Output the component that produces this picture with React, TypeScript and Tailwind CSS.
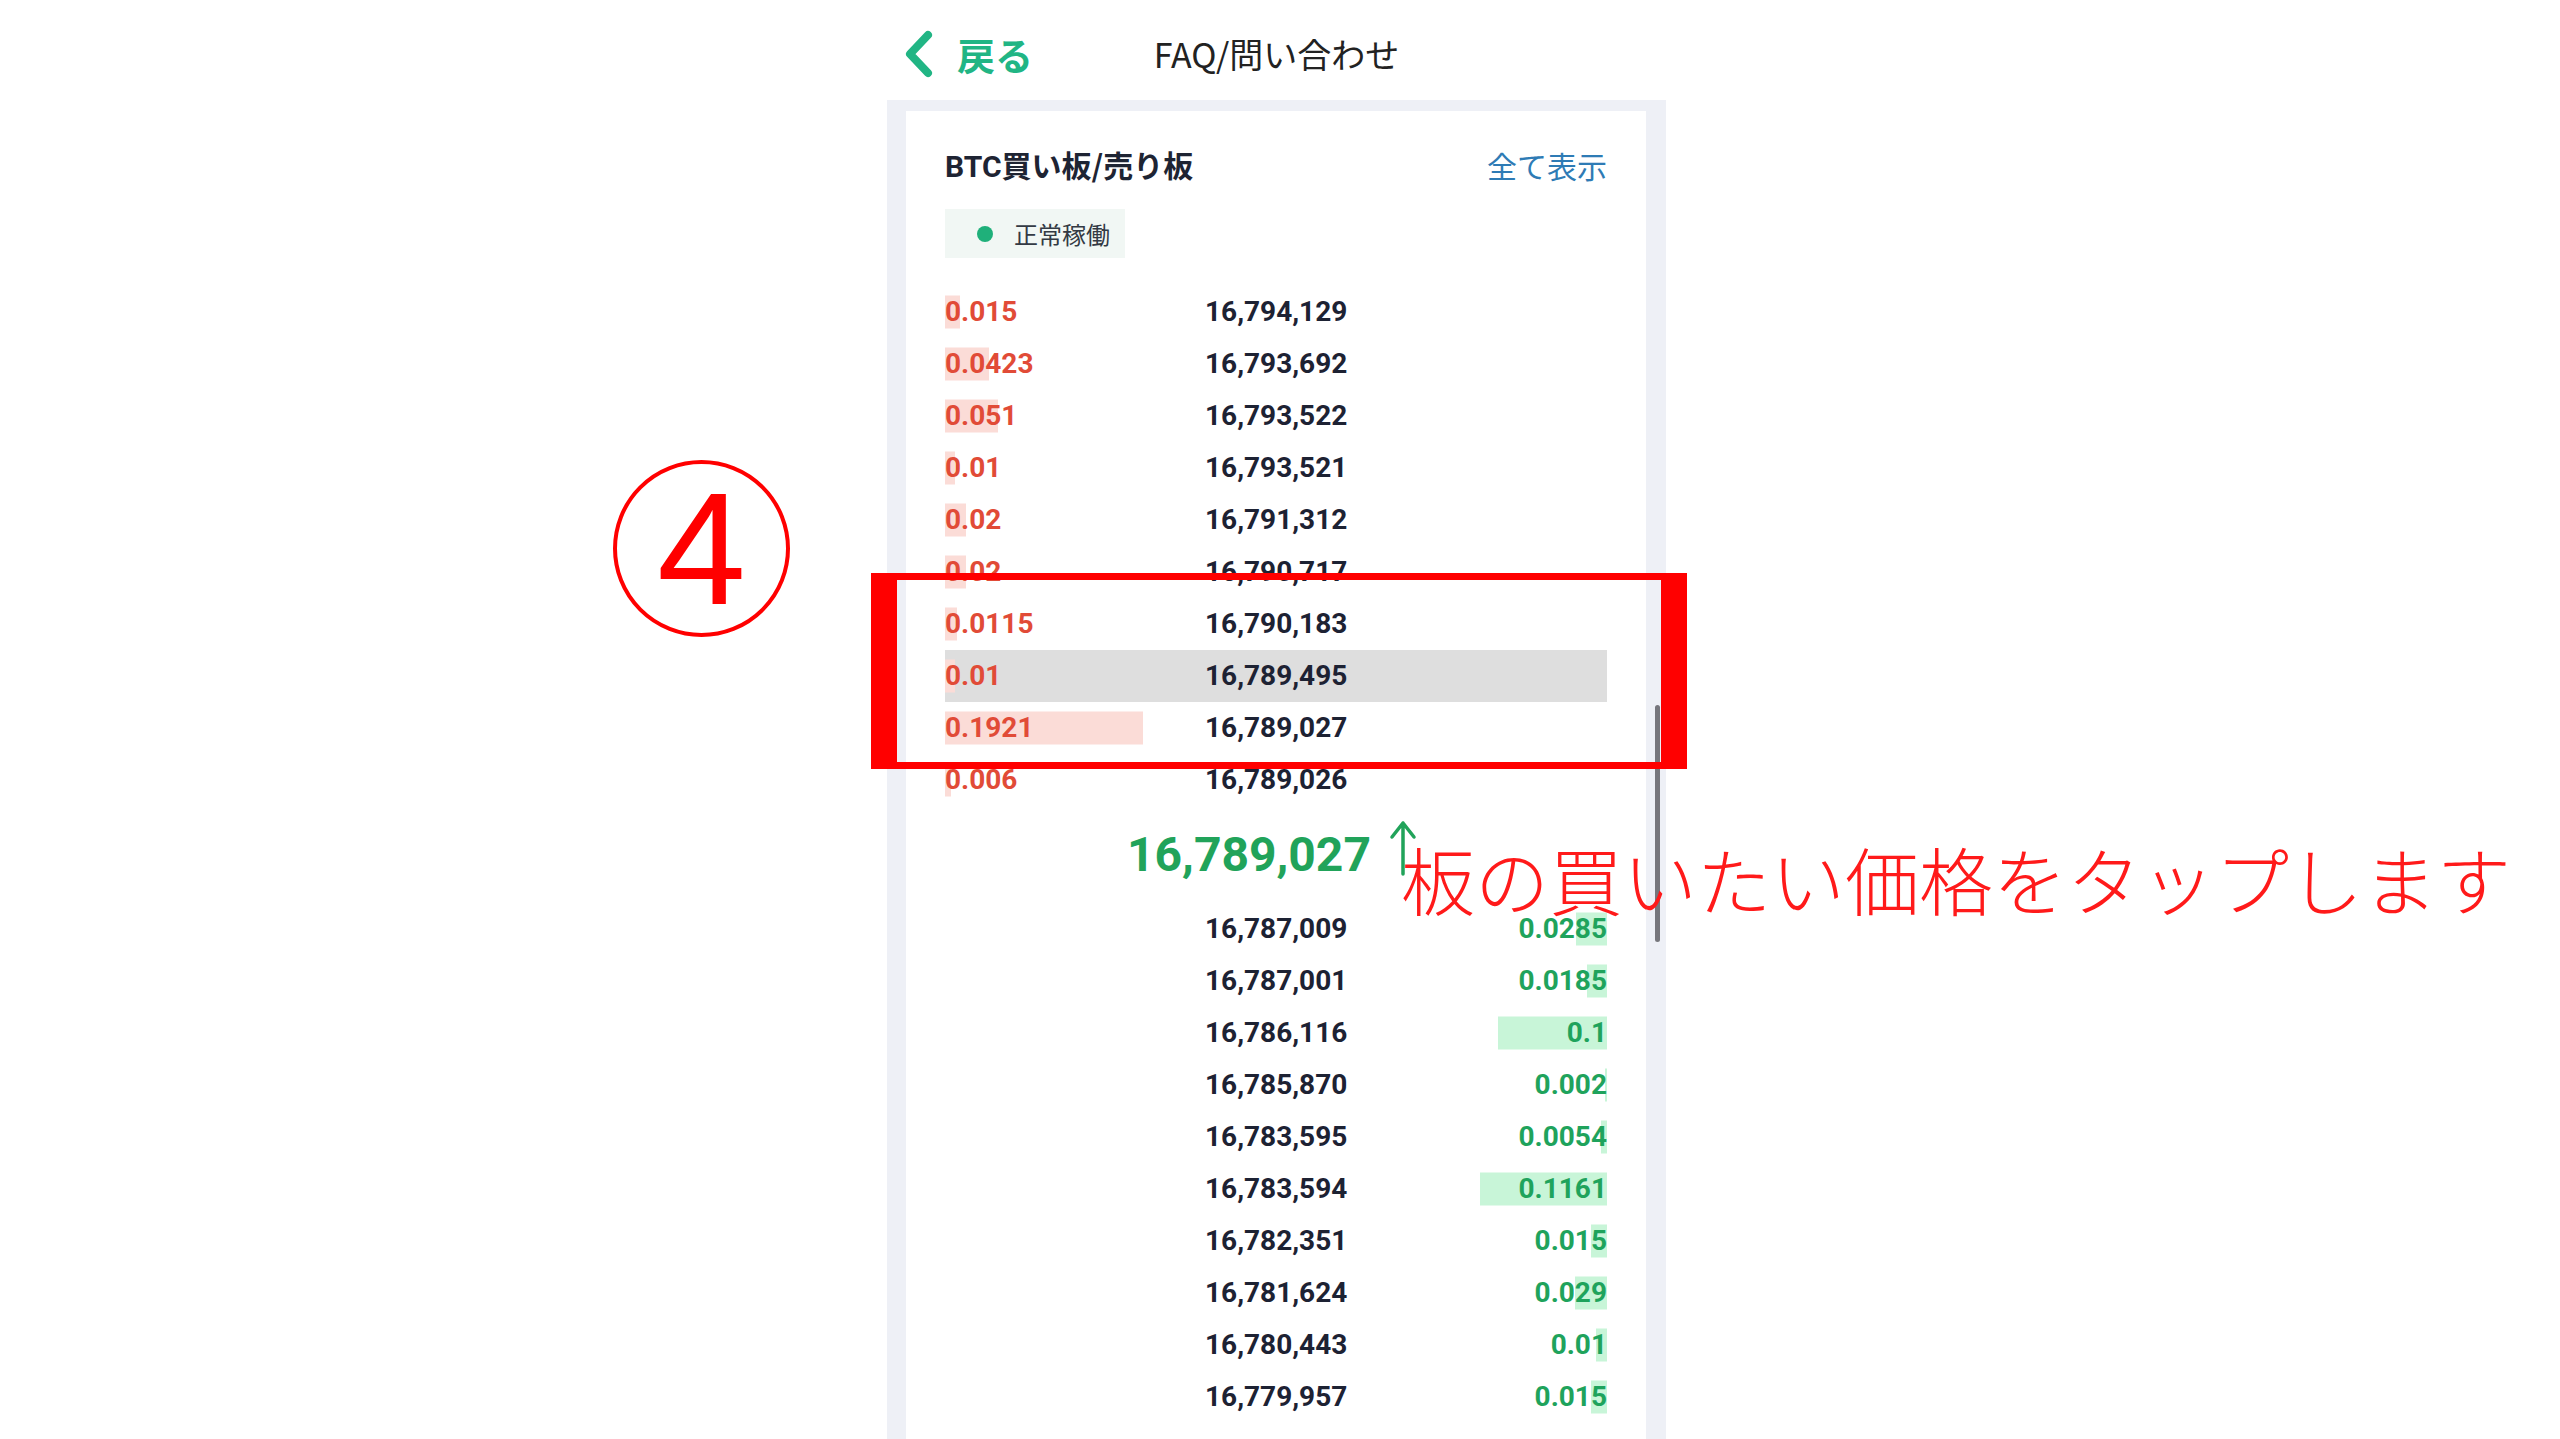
import React from "react"

const asks: [string, string][] = [
  ["0.015", "16,794,129"],
  ["0.0423", "16,793,692"],
  ["0.051", "16,793,522"],
  ["0.01", "16,793,521"],
  ["0.02", "16,791,312"],
  ["0.02", "16,790,717"],
  ["0.0115", "16,790,183"],
  ["0.01", "16,789,495"],
  ["0.1921", "16,789,027"],
  ["0.006", "16,789,026"],
]

const bids: [string, string][] = [
  ["16,787,009", "0.0285"],
  ["16,787,001", "0.0185"],
  ["16,786,116", "0.1"],
  ["16,785,870", "0.002"],
  ["16,783,595", "0.0054"],
  ["16,783,594", "0.1161"],
  ["16,782,351", "0.015"],
  ["16,781,624", "0.029"],
  ["16,780,443", "0.01"],
  ["16,779,957", "0.015"],
]

const jp = { fontFamily: '"Noto Sans CJK JP", "Noto Sans", sans-serif' }
const num = { fontFamily: 'Roboto, "Liberation Sans", sans-serif' }

function AskRow({ qty, price, active }: { qty: string; price: string; active: boolean }) {
  return (
    <div className={`flex h-[52px] items-center ${active ? "bg-[#dedede]" : ""}`}>
      <div className="relative flex h-full w-[260px] items-center">
        <div
          className="absolute left-0 top-1/2 h-[33px] -translate-y-1/2 bg-[#fbdcd7]"
          style={{ width: `${parseFloat(qty) * 1030}px` }}
        />
        <span className="relative text-[28px] font-bold text-[#e14b37]">{qty}</span>
      </div>
      <span className="text-[28px] font-bold text-[#1d2233]">{price}</span>
    </div>
  )
}

function BidRow({ qty, price }: { qty: string; price: string }) {
  return (
    <div className="flex h-[52px] items-center">
      <div className="w-[260px]" />
      <span className="text-[28px] font-bold text-[#1d2233]">{price}</span>
      <div className="relative flex h-full flex-1 items-center justify-end">
        <div
          className="absolute right-0 top-1/2 h-[33px] -translate-y-1/2 bg-[#c8f5d8]"
          style={{ width: `${parseFloat(qty) * 1095}px` }}
        />
        <span className="relative text-[28px] font-bold text-[#1fa35c]">{qty}</span>
      </div>
    </div>
  )
}

export default function App() {
  return (
    <div className="relative h-[1439px] w-full overflow-hidden bg-white">
      <div className="ml-[887px] flex h-full w-[779px] flex-col">
        {/* header */}
        <div className="grid h-[100px] grid-cols-[1fr_auto_1fr] items-center pt-[8px]" style={jp}>
          <div className="flex items-center gap-[23px] pl-[16px]">
            <svg width="31" height="48" viewBox="0 0 31 48" fill="none">
              <path d="M25 5 L7 24 L25 43" stroke="#21b584" strokeWidth="8" strokeLinecap="round" strokeLinejoin="round" />
            </svg>
            <span className="text-[38px] font-bold leading-none text-[#21b584]">戻る</span>
          </div>
          <span className="text-[34px] leading-none text-[#222]">FAQ/問い合わせ</span>
          <div />
        </div>

        {/* card */}
        <div className="relative flex flex-1 flex-col bg-[#eef0f6] pl-[19px] pr-[20px] pt-[11px]">
          <div className="flex flex-1 flex-col bg-white px-[39px] pt-[36px]">
            <div className="flex h-[36px] items-center justify-between" style={jp}>
              <span className="text-[30px] font-bold text-[#1e2433]">
                <span style={num}>BTC</span>買い板/売り板
              </span>
              <span className="text-[30px] text-[#2e7bb5]">全て表示</span>
            </div>
            <div className="mt-[26px] flex">
              <div className="flex h-[49px] items-center gap-[21px] bg-[#f1f7f4] pl-[32px] pr-[15px]" style={jp}>
                <span className="h-[16px] w-[16px] rounded-full bg-[#1fb07a]" />
                <span className="text-[24px] text-[#333a44]">正常稼働</span>
              </div>
            </div>

            <div className="mt-[28px] flex flex-col" style={num}>
              {asks.map(([q, p], i) => (
                <AskRow key={i} qty={q} price={p} active={i === 7} />
              ))}
              <div className="flex h-[97px] items-center pl-[182px]">
                <span className="text-[48px] font-bold leading-none text-[#21a35a]">16,789,027</span>
                <svg className="ml-[18px] -mt-[14px]" width="28" height="56" viewBox="0 0 28 56" fill="none">
                  <path d="M14 54 L14 3 M3 17 L14 3 L25 17" stroke="#21a35a" strokeWidth="3.5" strokeLinecap="round" strokeLinejoin="round" />
                </svg>
              </div>
              {bids.map(([p, q], i) => (
                <BidRow key={i} qty={q} price={p} />
              ))}
            </div>
          </div>
          {/* scrollbar */}
          <div className="absolute left-[768px] top-[605px] h-[237px] w-[5px] rounded-full bg-[#76767c]" />
        </div>
      </div>

      {/* annotations */}
      <div className="absolute left-[613px] top-[460px] flex h-[177px] w-[177px] items-center justify-center rounded-full border-[4px] border-[#ff0000]">
        <span className="text-[160px] leading-none text-[#ff0000]" style={{ fontFamily: '"Liberation Sans", Arial, sans-serif' }}>
          4
        </span>
      </div>
      <div className="absolute left-[871px] top-[573px] h-[196px] w-[816px] border-x-[26px] border-y-[7px] border-[#ff0000]" />
      <div
        className="absolute left-[1401px] top-[841px] whitespace-nowrap text-[74px] font-light leading-none text-[#ff1a1a]"
        style={jp}
      >
        板の買いたい価格をタップします
      </div>
    </div>
  )
}
